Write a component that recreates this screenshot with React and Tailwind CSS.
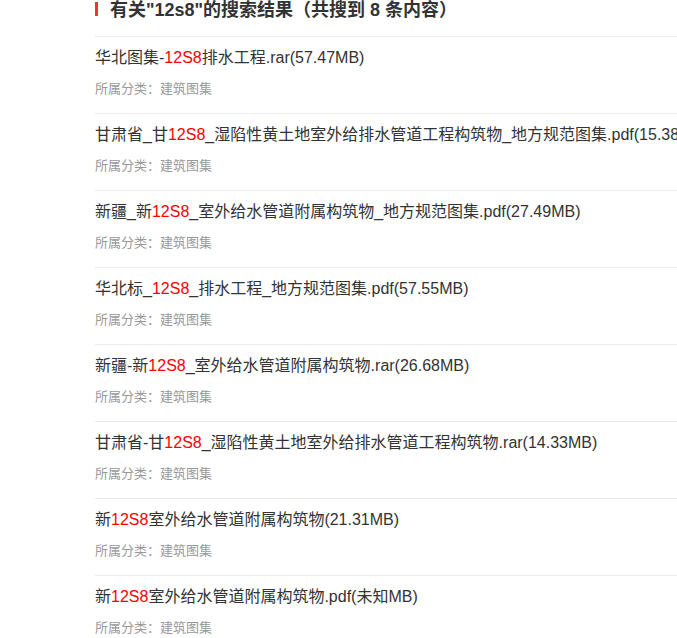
import React from "react";

const items = [
  ["华北图集-", "12S8", "排水工程.rar(57.47MB)"],
  ["甘肃省_甘", "12S8", "_湿陷性黄土地室外给排水管道工程构筑物_地方规范图集.pdf(15.38MB)"],
  ["新疆_新", "12S8", "_室外给水管道附属构筑物_地方规范图集.pdf(27.49MB)"],
  ["华北标_", "12S8", "_排水工程_地方规范图集.pdf(57.55MB)"],
  ["新疆-新", "12S8", "_室外给水管道附属构筑物.rar(26.68MB)"],
  ["甘肃省-甘", "12S8", "_湿陷性黄土地室外给排水管道工程构筑物.rar(14.33MB)"],
  ["新", "12S8", "室外给水管道附属构筑物(21.31MB)"],
  ["新", "12S8", "室外给水管道附属构筑物.pdf(未知MB)"],
];

export default function App() {
  return (
    <div
      className="w-[677px] h-[638px] overflow-hidden bg-white pl-[95px]"
      style={{ fontFamily: '"Liberation Sans", Arial, "Noto Sans CJK SC", sans-serif' }}
    >
      <div className="flex items-start h-[21px] mb-[15px] whitespace-nowrap">
        <div className="w-[3px] h-[14px] mt-[2px] bg-[#f03232]" />
        <h2 className="ml-[12px] text-[18px] leading-[21px] font-bold text-[#333]">
          有关"12s8"的搜索结果（共搜到 8 条内容）
        </h2>
      </div>
      {items.map((it, i) => (
        <div key={i} className="border-t border-[#ebebeb] pt-[9px] pb-[14px] whitespace-nowrap">
          <div className="text-[16px] leading-[24px] text-[#333]">
            {it[0]}
            <span className="text-[#ff0000]">{it[1]}</span>
            {it[2]}
          </div>
          <div className="mt-[9px] text-[13px] leading-[20px] text-[#999]">所属分类：建筑图集</div>
        </div>
      ))}
    </div>
  );
}
